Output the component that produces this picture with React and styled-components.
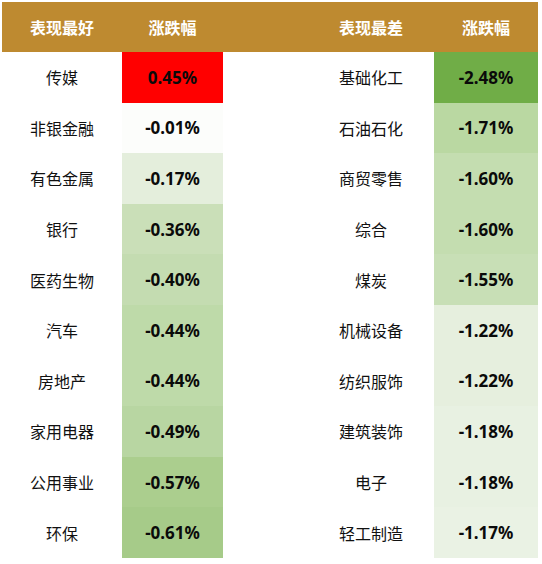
import React from 'react';
import styled, { createGlobalStyle } from 'styled-components';

const GlobalStyle = createGlobalStyle`
  html, body {
    margin: 0;
    padding: 0;
    background: #ffffff;
  }
  body {
    font-family: "Noto Sans CJK SC", "Noto Sans", sans-serif;
  }
`;

const COLS = '120px 101px 85px 126px 104px';

const Wrap = styled.div`
  padding: 2px 0 0 2px;
  width: 536px;
`;

const HeaderRow = styled.div`
  display: grid;
  grid-template-columns: ${COLS};
  height: 50px;
  background: #be8a30;
`;

const HeadCell = styled.div`
  display: flex;
  align-items: center;
  justify-content: center;
  color: #ffffff;
  font-size: 16px;
  font-weight: bold;
  font-family: "Noto Sans CJK SC", sans-serif;
`;

const Body = styled.div`
  display: grid;
  grid-template-columns: ${COLS};
  grid-auto-rows: 50.6px;
`;

const Name = styled.div`
  display: flex;
  align-items: center;
  justify-content: center;
  color: #111111;
  font-size: 16px;
  font-family: "Noto Sans CJK SC", sans-serif;
`;

const Value = styled.div`
  display: flex;
  align-items: center;
  justify-content: center;
  background: ${(p) => p.$bg};
  color: #0a0a0a;
  font-size: 17px;
  font-weight: bold;
  font-family: "Noto Sans", "Noto Sans CJK SC", sans-serif;
`;

const Gap = styled.div``;

const best = [
  ['传媒', '0.45%', '#ff0000'],
  ['非银金融', '-0.01%', '#fcfdfb'],
  ['有色金属', '-0.17%', '#e4eedc'],
  ['银行', '-0.36%', '#cadfb8'],
  ['医药生物', '-0.40%', '#c4dcb1'],
  ['汽车', '-0.44%', '#bedaa9'],
  ['房地产', '-0.44%', '#bedaa9'],
  ['家用电器', '-0.49%', '#b8d6a2'],
  ['公用事业', '-0.57%', '#abce8e'],
  ['环保', '-0.61%', '#a6cb89'],
];

const worst = [
  ['基础化工', '-2.48%', '#70ad47'],
  ['石油石化', '-1.71%', '#bad8a2'],
  ['商贸零售', '-1.60%', '#c4ddb0'],
  ['综合', '-1.60%', '#c4ddb0'],
  ['煤炭', '-1.55%', '#c8dfb6'],
  ['机械设备', '-1.22%', '#e6efde'],
  ['纺织服饰', '-1.22%', '#e6efde'],
  ['建筑装饰', '-1.18%', '#e8f1e2'],
  ['电子', '-1.18%', '#e8f1e2'],
  ['轻工制造', '-1.17%', '#eaf2e4'],
];

export default function App() {
  return (
    <Wrap>
      <GlobalStyle />
      <HeaderRow>
        <HeadCell>表现最好</HeadCell>
        <HeadCell>涨跌幅</HeadCell>
        <Gap />
        <HeadCell>表现最差</HeadCell>
        <HeadCell>涨跌幅</HeadCell>
      </HeaderRow>
      <Body>
        {best.map((b, i) => {
          const w = worst[i];
          return (
            <React.Fragment key={i}>
              <Name>{b[0]}</Name>
              <Value $bg={b[2]}>{b[1]}</Value>
              <Gap />
              <Name>{w[0]}</Name>
              <Value $bg={w[2]}>{w[1]}</Value>
            </React.Fragment>
          );
        })}
      </Body>
    </Wrap>
  );
}
